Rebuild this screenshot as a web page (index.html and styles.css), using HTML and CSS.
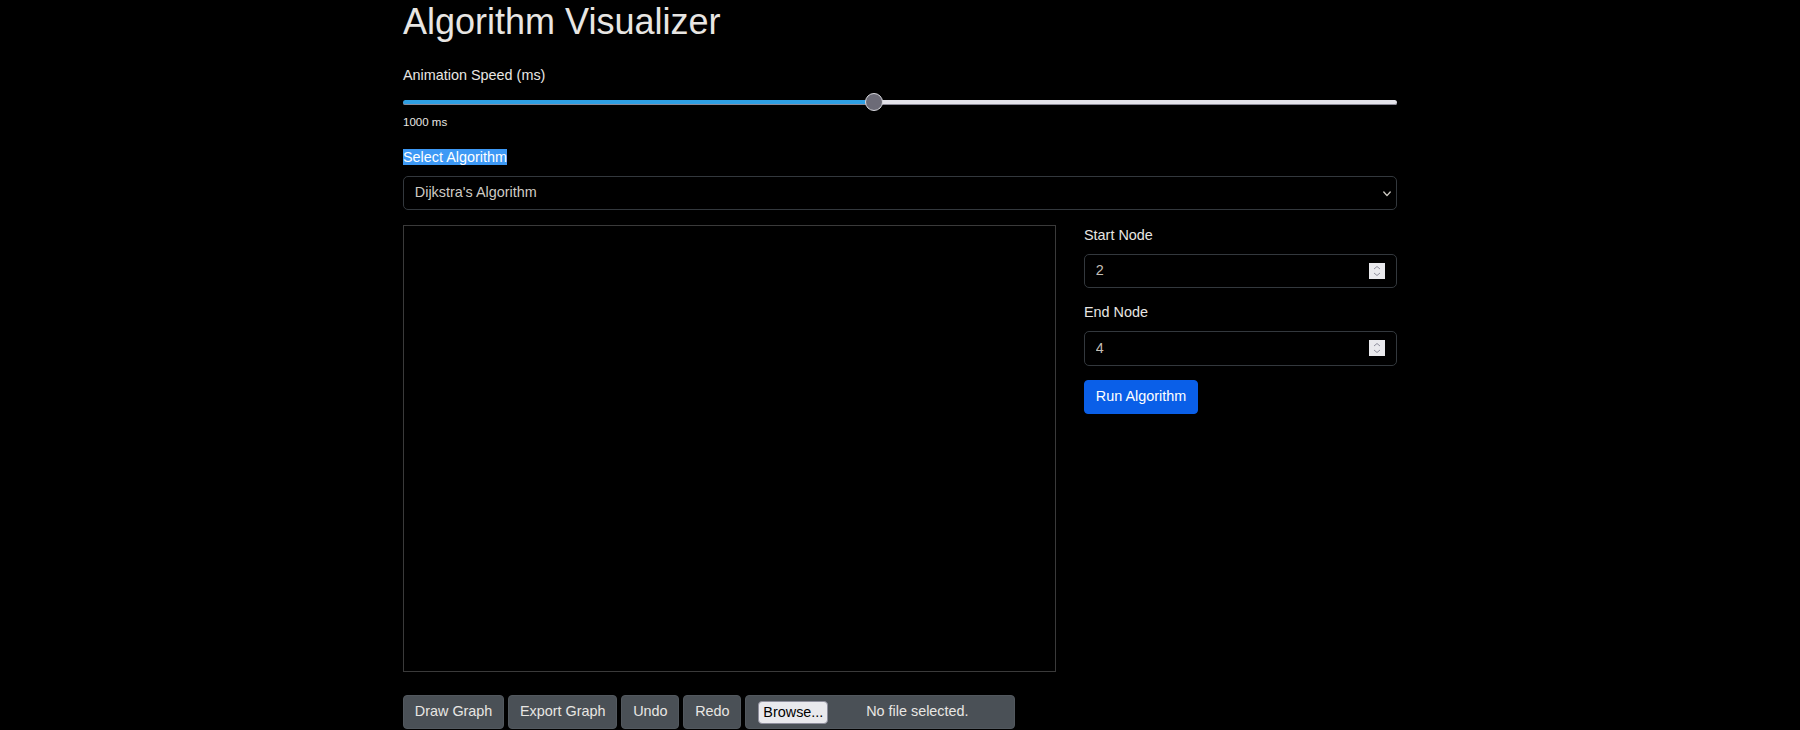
FILE: index.html
```html
<!DOCTYPE html>
<html lang="en">
<head>
<meta charset="utf-8">
<title>Algorithm Visualizer</title>
<link rel="stylesheet" href="styles.css">
</head>
<body>
<div class="container">
  <h1 class="title">Algorithm Visualizer</h1>

  <div class="group speed">
    <label class="form-label" for="speed">Animation Speed (ms)</label>
    <input type="range" class="range" id="speed" min="100" max="2000" value="1000" style="--fill: 47.4%">
    <small class="hint">1000 ms</small>
  </div>

  <div class="group algo">
    <label class="form-label" for="algo"><span class="selected-text">Select Algorithm</span></label>
    <div class="select-wrap">
      <select class="form-select" id="algo">
        <option>Dijkstra's Algorithm</option>
      </select>
      <svg class="chev" width="8" height="6" viewBox="0 0 8 6"><path d="M0.8 1 L4 4.6 L7.2 1" fill="none" stroke="#cbc7c0" stroke-width="1.4" stroke-linecap="round" stroke-linejoin="round"/></svg>
    </div>
  </div>

  <div class="workspace">
    <div class="canvas-box"></div>
    <div class="side">
      <div class="field">
        <label class="form-label" for="start">Start Node</label>
        <div class="num">
          <input type="number" id="start" value="2">
          <svg class="spin" width="16" height="16" viewBox="0 0 16 16"><rect width="16" height="16" fill="#e9e9ed"/><path d="M5 6 L8 3.5 L11 6" fill="none" stroke="#8f8f9d" stroke-width="1"/><path d="M5 10 L8 12.5 L11 10" fill="none" stroke="#8f8f9d" stroke-width="1"/></svg>
        </div>
      </div>
      <div class="field">
        <label class="form-label" for="end">End Node</label>
        <div class="num">
          <input type="number" id="end" value="4">
          <svg class="spin" width="16" height="16" viewBox="0 0 16 16"><rect width="16" height="16" fill="#e9e9ed"/><path d="M5 6 L8 3.5 L11 6" fill="none" stroke="#8f8f9d" stroke-width="1"/><path d="M5 10 L8 12.5 L11 10" fill="none" stroke="#8f8f9d" stroke-width="1"/></svg>
        </div>
      </div>
      <button class="btn btn-primary">Run Algorithm</button>
    </div>
  </div>

  <div class="toolbar">
    <button class="btn btn-secondary">Draw Graph</button>
    <button class="btn btn-secondary">Export Graph</button>
    <button class="btn btn-secondary">Undo</button>
    <button class="btn btn-secondary">Redo</button>
    <div class="file-box">
      <span class="browse">Browse...</span>
      <span class="file-label">No file selected.</span>
    </div>
  </div>
</div>
</body>
</html>
```

FILE: styles.css
```css
html, body {
  margin: 0;
  background: #000;
}

body {
  color: #e8e6e3;
  font-family: "Liberation Sans", Arial, sans-serif;
  font-size: 14.4px;
  line-height: 1.5;
  overflow: hidden;
}

.container {
  width: 994px;
  margin: 0 auto;
}

.title {
  margin: 0;
  font-size: 36px;
  font-weight: 400;
  line-height: 1.2;
  color: #e8e6e3;
}

.form-label {
  display: inline-block;
  margin-bottom: 7.2px;
}

.speed {
  margin-top: 21.4px;
}

.range {
  display: block;
  width: 100%;
  height: 18px;
  margin: 0;
  padding: 0;
  -webkit-appearance: none;
  appearance: none;
  background: transparent;
}

.range::-webkit-slider-runnable-track {
  height: 5px;
  border-radius: 3px;
  background: linear-gradient(to right, #2e9fe3 0, #2e9fe3 var(--fill), #e4e3ea var(--fill), #e4e3ea 100%);
  box-shadow: inset 0 -1px 0 #8b8997;
}

.range::-webkit-slider-thumb {
  -webkit-appearance: none;
  box-sizing: border-box;
  width: 18px;
  height: 18px;
  margin-top: -6.5px;
  border-radius: 50%;
  background: #6c6b77;
  border: 1px solid #d8d8de;
}

.hint {
  display: block;
  margin-top: 3px;
  font-size: 11.52px;
  line-height: 1.5;
}

.algo {
  margin-top: 15.6px;
}

.selected-text {
  background: #3d99f5;
  color: #fff;
}

.select-wrap {
  position: relative;
}

.form-select {
  display: block;
  box-sizing: border-box;
  width: 100%;
  height: 34.4px;
  margin: 0;
  padding: 5.4px 36px 5.4px 10.8px;
  font: inherit;
  line-height: 1.5;
  color: #cfcbc4;
  background: #000;
  border: 1px solid #33383d;
  border-radius: 5px;
  -webkit-appearance: none;
  appearance: none;
}

.chev {
  position: absolute;
  right: 6px;
  top: 14.5px;
}

.workspace {
  display: flex;
  align-items: flex-start;
  gap: 28px;
  margin-top: 14.4px;
}

.canvas-box {
  box-sizing: border-box;
  width: 653px;
  height: 447px;
  border: 1px solid #3a3a3a;
}

.side {
  width: 313px;
}

.field {
  margin-bottom: 14.4px;
}

.num {
  display: flex;
  align-items: center;
  box-sizing: border-box;
  height: 34.4px;
  padding: 0 11px 0 10.8px;
  border: 1px solid #33383d;
  border-radius: 5px;
}

.num input {
  flex: 1;
  min-width: 0;
  margin: 0;
  padding: 0;
  border: 0;
  outline: none;
  background: transparent;
  color: #c4bfb7;
  font: inherit;
  -moz-appearance: textfield;
  appearance: textfield;
}

.num input::-webkit-inner-spin-button,
.num input::-webkit-outer-spin-button {
  -webkit-appearance: none;
  margin: 0;
}

.spin {
  display: block;
  flex: none;
}

.btn {
  box-sizing: border-box;
  height: 34.4px;
  margin: 0;
  padding: 5.4px 10.8px;
  font: inherit;
  line-height: 1.5;
  border-radius: 4px;
  white-space: nowrap;
}

.btn-primary {
  background: #0a5fe8;
  border: 1px solid #0a5fe8;
  color: #fff;
}

.btn-secondary {
  background: #4a5056;
  border: 1px solid #52585e;
  color: #e8e6e3;
}

.toolbar {
  display: flex;
  align-items: flex-start;
  gap: 4px;
  margin-top: 23px;
}

.file-box {
  display: flex;
  align-items: center;
  box-sizing: border-box;
  width: 270px;
  height: 34.4px;
  padding-left: 12px;
  padding-right: 8px;
  background: #4a5056;
  border: 1px solid #52585e;
  border-radius: 4px;
}

.browse {
  box-sizing: border-box;
  height: 23px;
  padding: 0 4px;
  line-height: 21px;
  background: #e9e9ed;
  border: 1px solid #8f8f9d;
  border-radius: 4px;
  color: #000;
}

.file-label {
  flex: 1;
  text-align: center;
  color: #e8e6e3;
}
```
